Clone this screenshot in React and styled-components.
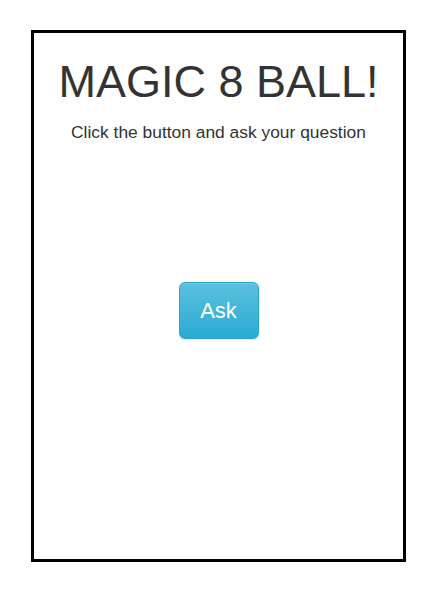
import React from "react";
import styled, { createGlobalStyle } from "styled-components";

const Global = createGlobalStyle`
  html, body { margin: 0; padding: 0; background: #fff; }
  body { font-family: "Liberation Sans", Arial, sans-serif; color: #333; }
`;

const Frame = styled.div`
  box-sizing: border-box;
  margin: 30px 0 0 31px;
  width: 375px;
  height: 532px;
  border: 3px solid #000;
  display: flex;
  flex-direction: column;
  align-items: center;
`;

const Title = styled.h1`
  margin: 24px 0 0;
  font-size: 45px;
  line-height: 49px;
  font-weight: 400;
  color: #333;
  text-align: center;
`;

const Subtitle = styled.p`
  margin: 16px 0 0;
  font-size: 17.4px;
  line-height: 21px;
  color: #333;
  text-align: center;
`;

const AskButton = styled.button`
  box-sizing: border-box;
  margin-top: 139px;
  width: 80px;
  height: 57px;
  border: 1px solid #28a4c9;
  border-radius: 6px;
  background: linear-gradient(to bottom, #5bc0de 0%, #2aabd2 100%);
  box-shadow: inset 0 1px 0 rgba(255, 255, 255, 0.15), 0 1px 1px rgba(0, 0, 0, 0.075);
  color: #fff;
  font-family: "Liberation Sans", Arial, sans-serif;
  font-size: 22px;
  line-height: 1;
  cursor: pointer;
  padding: 0;
`;

export default function App() {
  return (
    <>
      <Global />
      <Frame>
        <Title>MAGIC 8 BALL!</Title>
        <Subtitle>Click the button and ask your question</Subtitle>
        <AskButton>Ask</AskButton>
      </Frame>
    </>
  );
}
